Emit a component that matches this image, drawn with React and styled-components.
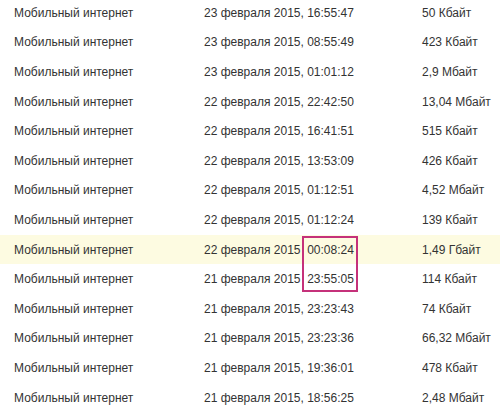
import React from 'react';
import styled, { createGlobalStyle } from 'styled-components';

const rows = [
  ['23 февраля 2015', '16:55:47', '50 Кбайт'],
  ['23 февраля 2015', '08:55:49', '423 Кбайт'],
  ['23 февраля 2015', '01:01:12', '2,9 Мбайт'],
  ['22 февраля 2015', '22:42:50', '13,04 Мбайт'],
  ['22 февраля 2015', '16:41:51', '515 Кбайт'],
  ['22 февраля 2015', '13:53:09', '426 Кбайт'],
  ['22 февраля 2015', '01:12:51', '4,52 Мбайт'],
  ['22 февраля 2015', '01:12:24', '139 Кбайт'],
  ['22 февраля 2015', '00:08:24', '1,49 Гбайт'],
  ['21 февраля 2015', '23:55:05', '114 Кбайт'],
  ['21 февраля 2015', '23:23:43', '74 Кбайт'],
  ['21 февраля 2015', '23:23:36', '66,32 Мбайт'],
  ['21 февраля 2015', '19:36:01', '478 Кбайт'],
  ['21 февраля 2015', '18:56:25', '2,48 Мбайт'],
];

const ACTIVE = 8;

const GlobalStyle = createGlobalStyle`
  body {
    margin: 0;
    background: #fff;
    overflow: hidden;
  }
`;

const Table = styled.div`
  margin-top: -2px;
  font-family: Arial, "Liberation Sans", sans-serif;
  font-size: 12px;
  color: #333;
`;

const Row = styled.div`
  position: relative;
  display: grid;
  grid-template-columns: 190px 218px 1fr;
  align-items: center;
  height: 29.6px;
  padding-left: 14px;
  background: ${props => (props.$active ? '#fdfbe1' : 'transparent')};
`;

const Cell = styled.div`
  white-space: nowrap;
`;

const Comma = styled.span`
  visibility: ${props => (props.$hidden ? 'hidden' : 'visible')};
`;

// pink frame drawn over the two time cells
const Marker = styled.div`
  position: absolute;
  left: 302px;
  top: 1px;
  width: 52px;
  height: 52px;
  border: 2px solid #c5317a;
`;

export default function App() {
  return (
    <>
      <GlobalStyle />
      <Table>
        {rows.map(([date, time, size], i) => (
          <Row key={i} $active={i === ACTIVE}>
            <Cell>Мобильный интернет</Cell>
            <Cell>
              {date}
              <Comma $hidden={i === ACTIVE || i === ACTIVE + 1}>,</Comma> {time}
            </Cell>
            <Cell>{size}</Cell>
            {i === ACTIVE && <Marker />}
          </Row>
        ))}
      </Table>
    </>
  );
}
